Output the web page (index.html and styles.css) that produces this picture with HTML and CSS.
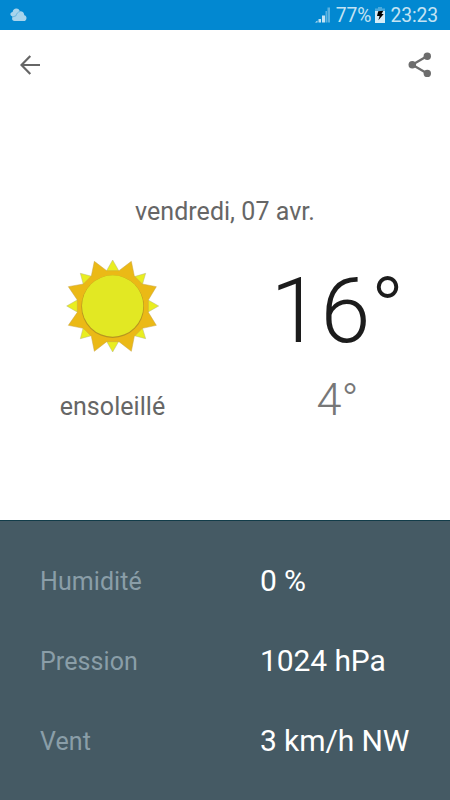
FILE: index.html
```
<!DOCTYPE html>
<html lang="fr">
<head>
  <meta charset="utf-8" />
  <link rel="stylesheet" href="styles.css">
  <title>Météo</title>
</head>
<body>
  <div class="status-bar">
    <svg class="status-cloud" width="18" height="14" viewBox="0 0 18 14">
      <path fill="#a9d4ec" d="M2.500 8.400C1 8 .3 7 .4 5.900.5 4.800 1.400 4 2.600 3.900 2.900 1.900 4.300.5 6.300.5c1.900 0 3.200 1.200 3.500 2.700 2.600-.3 4.500 1.400 4.500 4 1.400.3 2.200 1.400 2.200 2.700 0 1.900-1.100 3.100-2.800 3.100H4.500C2.900 13 2 12 2.100 10.600z"/>
      <path fill="none" stroke="#62b3de" stroke-width=".9" d="M2.300 9L6 7.800C6.500 5.500 7.800 4 10 3.500"/>
    </svg>
    <div class="status-right">
      <svg class="status-signal" width="15" height="16" viewBox="0 0 15 16">
        <path fill="#c4e3f3" d="M0 15.500L2.500 13.500V15.500zM3.500 12h2.500v3.500H3.500zM7 8.500h3v7H7z"/>
        <path fill="#5cb2e0" d="M10.500 4h1.500v11.500H10.500zM12.500 0.500h2.500v15h-2.500z"/>
      </svg>
      <span class="status-battery-level">77%</span>
      <svg class="status-battery" width="10" height="16" viewBox="0 0 10 16">
        <path fill="#4eabdd" d="M3 0h4v1.500h3V5H0V1.500h3z"/>
        <path fill="#d5ecf7" d="M0 4h10v12H0z"/>
        <path fill="#000" d="M3.200 4.300L8.300 3.800 6.500 7h2.200L3.400 13.200 4.600 9H2z"/>
      </svg>
      <span class="status-time">23:23</span>
    </div>
  </div>

  <div class="toolbar">
    <svg class="icon-back" width="21" height="20" viewBox="0 0 21 20">
      <path d="M20 10H1.500M10.300 1L1.500 10l8.800 9" fill="none" stroke="#666" stroke-width="2.200"/>
    </svg>
    <svg class="icon-share" width="24" height="26" viewBox="0 0 24 26">
      <path d="M19.300 4L4.300 12.800l15 8.700" fill="none" stroke="#6d6d6d" stroke-width="2.300"/>
      <g fill="#6d6d6d">
        <circle cx="19.300" cy="4.200" r="3.700"/>
        <circle cx="4.300" cy="12.800" r="3.800"/>
        <circle cx="19.300" cy="21.400" r="3.700"/>
      </g>
    </svg>
  </div>

  <div class="date">vendredi, 07 avr.</div>

  <div class="today">
    <div class="condition">
      <svg class="sun" width="115" height="115" viewBox="0 0 345 345">
        <!-- small yellow rays behind the orange star -->
        <path class="sun-rays" d="M173 30L205 86H141zM272 70L254 132 210 88zM311 168L255 200V136zM272 266L210 250 254 206zM173 306L141 250H205zM76 266L92 204 136 250zM35 168L91 136V200zM76 70L138 86 92 130z"/>
        <path class="sun-star" d="M118 34L155 62H192L229 34 238 78 262 102 304 110 280 150V187L304 226 262 235 238 259 229 304 192 275H155L118 304 109 259 85 235 40 226 67 187V150L40 110 85 102 109 78z"/>
        <circle class="sun-disc-shadow" cx="173" cy="170" r="94"/>
        <circle class="sun-disc" cx="173" cy="168" r="92"/>
      </svg>
      <div class="condition-name">ensoleillé</div>
    </div>
    <div class="temperatures">
      <div class="temp-high">16°</div>
      <div class="temp-low">4°</div>
    </div>
  </div>

  <div class="details">
    <div class="detail-row">
      <span class="detail-label">Humidité</span>
      <span class="detail-value">0 %</span>
    </div>
    <div class="detail-row">
      <span class="detail-label">Pression</span>
      <span class="detail-value">1024 hPa</span>
    </div>
    <div class="detail-row">
      <span class="detail-label">Vent</span>
      <span class="detail-value">3 km/h NW</span>
    </div>
  </div>
</body>
</html>
```

FILE: styles.css
```
* {
  box-sizing: border-box;
}
body {
  font-family: Roboto, "Liberation Sans", sans-serif;
  margin: 0;
  width: 450px;
  height: 800px;
  display: flex;
  flex-direction: column;
  background: #fff;
  color: #666;
  overflow: hidden;
}
svg {
  display: block;
  flex: none;
}
.status-bar {
  height: 30px;
  padding: 0 12px 0 10px;
  display: flex;
  align-items: center;
  justify-content: space-between;
  background: #0288d1;
  color: #c4e3f3;
  font-size: 19.3px;
}
.status-right {
  display: flex;
  align-items: center;
}
.status-battery-level {
  margin-left: 6px;
}
.status-battery {
  margin: 0 5px 0 4px;
}
.status-time {
  letter-spacing: -0.1px;
}
.toolbar {
  height: 70px;
  padding: 0 18px 0 20px;
  display: flex;
  align-items: center;
  justify-content: space-between;
}
.date {
  margin-top: 91px;
  height: 40px;
  line-height: 41px;
  font-size: 25px;
  letter-spacing: 0.03px;
  text-align: center;
}
.today {
  height: 289px;
  padding-top: 19px;
  display: grid;
  grid-template-columns: 225px 225px;
}
.condition {
  display: flex;
  flex-direction: column;
  align-items: center;
}
.sun-rays {
  fill: #e9ee20;
  stroke: #b9b680;
  stroke-width: 1.5;
}
.sun-star {
  fill: #ebb916;
  stroke: #c9a446;
  stroke-width: 1.5;
}
.sun-disc-shadow {
  fill: #b89620;
}
.sun-disc {
  fill: #e2e823;
}
.condition-name {
  margin-top: 22px;
  line-height: 40px;
  font-size: 25px;
  letter-spacing: 0.06px;
}
.temperatures {
  text-align: center;
  font-weight: 300;
}
.temp-high {
  height: 120px;
  line-height: 124px;
  font-size: 90px;
  color: #1c1c1c;
}
.temp-low {
  line-height: 60px;
  font-size: 45px;
  color: #777;
}
.details {
  height: 280px;
  padding-top: 20px;
  background: #455a64;
  border-top: 1px solid #123c49;
}
.detail-row {
  height: 80px;
  padding-left: 40px;
  display: grid;
  grid-template-columns: 220px 1fr;
  align-items: center;
}
.detail-label {
  font-size: 25px;
  letter-spacing: 0.08px;
  color: #8a9ea8;
}
.detail-value {
  padding-bottom: 2px;
  font-size: 30px;
  letter-spacing: -0.1px;
  color: #fff;
}
```
